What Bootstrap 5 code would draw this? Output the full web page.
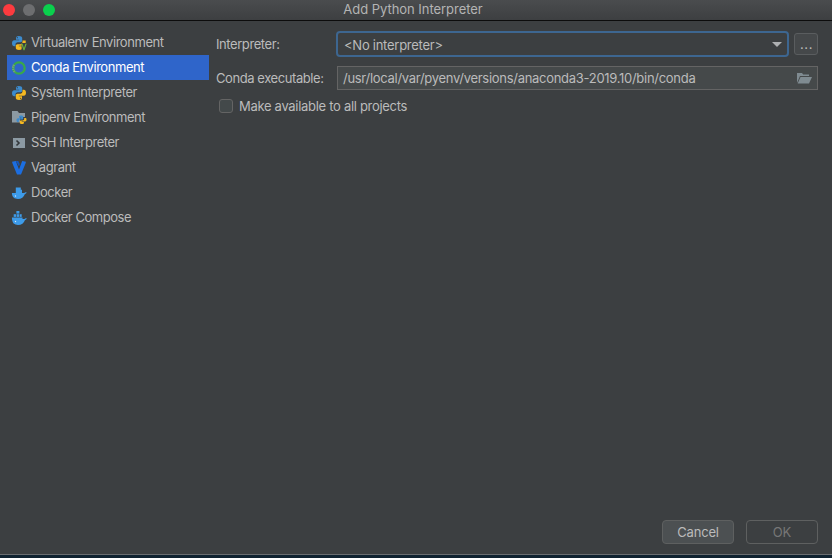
<!DOCTYPE html>
<html lang="en">
<head>
<meta charset="utf-8">
<title>Add Python Interpreter</title>
<link href="https://cdn.jsdelivr.net/npm/bootstrap@5.3.0/dist/css/bootstrap.min.css" rel="stylesheet">
<style>
html,body{height:100%;margin:0;background:#3c3f41;overflow:hidden}
body{font-family:Inter,"Liberation Sans",sans-serif;font-size:13px;color:#bbbbbb}
.win{height:558px}
.titlebar{height:21px;background:linear-gradient(#4a4c4e,#3d3f41);border-bottom:1px solid #0c0c0c;color:#b4b4b4;font-size:13px;line-height:19px;letter-spacing:-.04px;padding-right:6px}
.dots{left:3px;top:4px;gap:8px}
.dot{width:12px;height:12px;border-radius:50%}
.dot-r{background:#fc3b3f}.dot-g{background:#6d6e70}.dot-v{background:#0ad04d}
.mainrow{min-height:0}
.sidebar{width:209px;padding:9px 0 0 7px;letter-spacing:-.45px}
.side-item{height:25px;padding-left:4px;gap:4px;color:#bbbbbb;white-space:nowrap;line-height:25px}
.side-item.active-item{background:#2f65ca;color:#fff}
.side-item svg{width:16px;height:16px;flex:none}
.pane{padding:10px 14px 10px 7px}
.lbl{width:121px;flex:none;color:#bbbbbb;letter-spacing:-.42px;padding-top:1px}
.row-a{height:26px;margin-bottom:9px}
.row-b{height:24px}
.combo{width:453px;height:26px;margin:0 -1px;background:#3c3f41;border:2px solid #3d6690;border-radius:4px;padding:1px 0 0 6px;color:#bbbbbb;line-height:22px;letter-spacing:-.26px}
.combo-arrow{width:0;height:0;border-left:5px solid transparent;border-right:5px solid transparent;border-top:5px solid #aeb0b2;margin:-1px 5px 0 0}
.dots-btn{width:24px;height:22px;margin-left:6px;background:#45484a;border:1px solid #5a5d5f;border-radius:3px;color:#bbbbbb;padding:0 0 0 1px;line-height:18px;font-size:13px;letter-spacing:.6px}
.path-field{width:481px;height:24px;background:#45494a;border:1px solid #646464;padding:0 6px 0 5px;line-height:22px;color:#bbbbbb;white-space:nowrap;letter-spacing:-.29px}
.path-field svg{width:16px;height:14px;flex:none;margin-right:-1px}
.chk-row{margin:9px 0 0 3px;gap:6px;height:14px;line-height:14px;letter-spacing:-.3px}
.chk{width:14px;height:14px;background:#43494a;border:1px solid #646464;border-radius:3px;flex:none}
.act{gap:12px;margin-bottom:0}
.act-btn{width:72px;height:24px;border-radius:4px;font-size:13px;line-height:20px;padding:0;letter-spacing:-.2px}
.act-cancel{background:#4c5052;border:1px solid #5e6060;color:#bbbbbb}
.act-ok,.act-ok:disabled{background:#3c3f41;border:1px solid #5e6060;color:#777777;opacity:1}
.strip{height:4px;background:#0f2230;border-top:1px solid #6a6d70}
</style>
</head>
<body>
<div class="win d-flex flex-column">
  <div class="titlebar position-relative text-center flex-shrink-0">
    <div class="dots position-absolute d-flex"><span class="dot dot-r"></span><span class="dot dot-g"></span><span class="dot dot-v"></span></div>
    Add Python Interpreter
  </div>
  <div class="mainrow d-flex flex-grow-1">
    <div class="sidebar flex-shrink-0">
      <div class="side-item d-flex align-items-center">
        <svg viewBox="0 0 16 16"><path fill="#3d8bcd" d="M7.900 1C5.400 1 5 2 5 3v1.700h3.200v.6H3.200C1.900 5.300 1 6.300 1 8.200s.9 3 2.100 3H4.500V9.400c0-1.200 1-2.200 2.200-2.200h2.900c.9 0 1.600-.8 1.600-1.700V3c0-1.200-1.300-2-3.300-2zM6.300 2.100a.6.6 0 1 1 0 1.200.6.6 0 0 1 0-1.200z"/><path fill="#f5b921" d="M11.500 5.400V7c0 1.200-1 2.200-2.200 2.200H6.400c-.9 0-1.600.8-1.600 1.700V13c0 1.200 1.300 2 3.300 2 1.400 0 2.200-.3 2.500-.9V11.300H7.800v-.6h2.800L11 8h3.700V5.400z"/><path fill="#6aaf3c" d="M10.300 8.800l2.200 6.400h1l2.200-6.400h-1.300l-1.400 4.300-1.400-4.300z"/></svg>
        Virtualenv Environment
      </div>
      <div class="side-item active-item d-flex align-items-center">
        <svg viewBox="0 0 16 16"><circle cx="8" cy="8" r="5.700" fill="none" stroke="#39a84a" stroke-width="2.300"/><path d="M3 4.800A5.700 5.700 0 0 0 4.200 12.300" fill="none" stroke="#7aa07e" stroke-width="2.300" stroke-dasharray="1.200 .8"/></svg>
        Conda Environment
      </div>
      <div class="side-item d-flex align-items-center">
        <svg viewBox="0 0 16 16"><path fill="#3d8bcd" d="M7.900 1C5.400 1 5 2 5 3v1.700h3.200v.6H3.200C1.900 5.300 1 6.300 1 8.200s.9 3 2.100 3H4.500V9.400c0-1.200 1-2.200 2.200-2.200h2.900c.9 0 1.600-.8 1.600-1.700V3c0-1.200-1.300-2-3.300-2zM6.300 2.100a.6.6 0 1 1 0 1.200.6.6 0 0 1 0-1.200z"/><path fill="#f5b921" d="M11.500 4.800V6.600c0 1.200-1 2.200-2.200 2.200H6.400c-.9 0-1.600.8-1.600 1.700V13c0 1.200 1.300 2 3.300 2 2.500 0 2.900-1 2.900-2v-1.700H7.800v-.6h5c1.300 0 2.200-1 2.200-2.900s-.9-3-2.100-3zM9.700 12.700a.6.6 0 1 1 0 1.200.6.6 0 0 1 0-1.200z"/></svg>
        System Interpreter
      </div>
      <div class="side-item d-flex align-items-center">
        <svg viewBox="0 0 16 16"><path fill="#8c9aa3" d="M1 1h5.500L8 3h6v4H9v5.500H1z"/><path fill="#3d8bcd" d="M10 5.500c-1.500 0-2 .7-2 1.300v1H10.300v.5H7c-.9 0-1.500.7-1.500 1.900s.6 1.800 1.400 1.800h.9v-1.100c0-.8.6-1.400 1.400-1.400h1.900c.6 0 1.100-.5 1.100-1.100V6.800c0-.7-.9-1.300-1.800-1.300z"/><path fill="#f5b921" d="M13.200 8v1c0 .8-.6 1.400-1.400 1.400H9.900c-.6 0-1.100.5-1.100 1.100v1.400c0 .7.900 1.200 2.100 1.200 1.500 0 2-.6 2-1.200v-1H10.700v-.4h3.400c.9 0 1.400-.7 1.400-1.900S15 8 14.200 8z"/></svg>
        Pipenv Environment
      </div>
      <div class="side-item d-flex align-items-center">
        <svg viewBox="0 0 16 16"><rect x="2" y="3" width="12" height="10" fill="#8c9aa3"/><path d="M5.500 5.500L8 8l-2.500 2.500" fill="none" stroke="#33373a" stroke-width="1.600"/></svg>
        SSH Interpreter
      </div>
      <div class="side-item d-flex align-items-center">
        <svg viewBox="0 0 16 16"><path fill="#1c6ee0" d="M1 1.800L4.800 1 8 9.500 11.200 1 15 1.800 14.500 3.500 10 14.500H6L1.500 3.500z"/><path fill="#1557bd" d="M4.800 1H7.300L8.700 4 8 6.500z"/></svg>
        Vagrant
      </div>
      <div class="side-item d-flex align-items-center">
        <svg viewBox="0 0 16 16"><path fill="#3d9be9" d="M4.800 2.500h5v2.300H11V8h2.400c.4-.8 1.200-1 2.200-.7-.2 1-.9 1.500-1.700 1.600-1 3-3.500 5-7 5-3.500 0-5.900-1.500-6-5.900h3.900V5h0z"/><circle cx="4.500" cy="11" r=".7" fill="#cfe6fa"/></svg>
        Docker
      </div>
      <div class="side-item d-flex align-items-center">
        <svg viewBox="0 0 16 16"><rect x="5.400" y="1" width="3" height="2.600" fill="#3d9be9"/><rect x="2.700" y="4.200" width="2.500" height="2.700" fill="#3d9be9"/><rect x="5.700" y="4.200" width="2.500" height="2.700" fill="#3d9be9"/><rect x="8.700" y="4.200" width="2" height="2.700" fill="#3d9be9"/><path fill="#3d9be9" d="M.9 7.600h10.600V9h2c.4-.8 1.200-1 2.200-.7-.2 1-.9 1.500-1.700 1.600-1 3-3.500 5.100-7 5.100-3.500 0-6-1.600-6.100-7.400z"/><circle cx="4.500" cy="11.500" r=".7" fill="#cfe6fa"/></svg>
        Docker Compose
      </div>
    </div>
    <div class="pane flex-grow-1 d-flex flex-column">
      <div class="row-a d-flex align-items-center">
        <div class="lbl">Interpreter:</div>
        <div class="combo d-flex align-items-center justify-content-between">&lt;No interpreter&gt;<span class="combo-arrow"></span></div>
        <button class="dots-btn btn" type="button">...</button>
      </div>
      <div class="row-b d-flex align-items-center">
        <div class="lbl">Conda executable:</div>
        <div class="path-field d-flex align-items-center justify-content-between">/usr/local/var/pyenv/versions/anaconda3-2019.10/bin/conda
          <svg viewBox="0 0 16 14"><path fill="#7f8b91" d="M1 2h5l1.200 1.500H13V5H4L1 12z"/><path fill="#7f8b91" d="M4.500 6H16l-3 6.500H1.700z"/></svg>
        </div>
      </div>
      <div class="chk-row d-flex align-items-center"><span class="chk"></span>Make available to all projects</div>
      <div class="act d-flex justify-content-end mt-auto">
        <button class="btn act-btn act-cancel" type="button">Cancel</button>
        <button class="btn act-btn act-ok" type="button" disabled>OK</button>
      </div>
    </div>
  </div>
  <div class="strip"></div>
</div>
</body>
</html>
